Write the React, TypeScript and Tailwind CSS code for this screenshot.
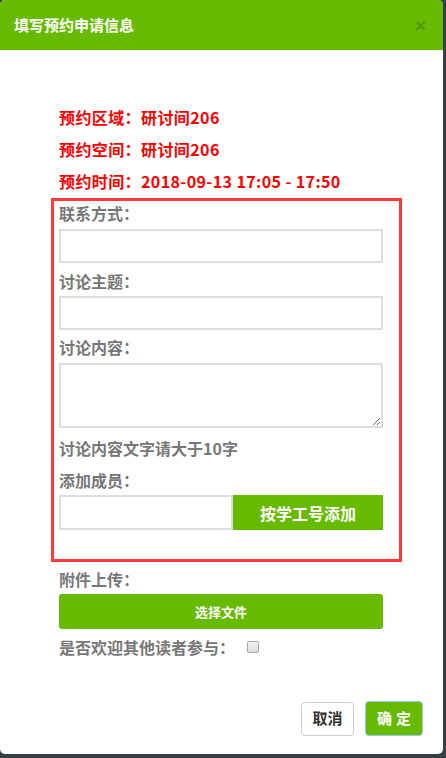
import React from 'react';

const font = { fontFamily: '"Microsoft YaHei", "Noto Sans CJK SC", "Noto Sans", sans-serif' };

const Label: React.FC<{ text: string; className?: string }> = ({ text, className }) => (
  <div className={`h-[24px] leading-[24px] text-[16px] font-semibold text-[#777] ${className ?? ''}`}>{text}</div>
);

export default function App() {
  return (
    <div className="w-[446px] h-[758px] bg-[#353f44] overflow-hidden" style={font}>
      <div className="w-[443px] h-[754px] bg-white rounded-[5px] overflow-hidden flex flex-col">
        {/* header */}
        <div className="h-[50px] shrink-0 bg-[#66bb00] flex items-center justify-between pl-[14px] pr-[17px]">
          <span className="text-[15px] font-bold text-white">填写预约申请信息</span>
          <span className="text-[19px] font-bold leading-none text-black opacity-20" style={{ fontFamily: '"Liberation Sans", Arial, sans-serif' }}>
            ×
          </span>
        </div>

        {/* body */}
        <div className="pt-[51px] pl-[51px]">
          <div className="pl-[8px] text-[16px] font-bold text-[#ff0000] leading-[32px] tracking-[0.4px]">
            <div>预约区域：研讨间206</div>
            <div>预约空间：研讨间206</div>
            <div>预约时间：2018-09-13 17:05 - 17:50</div>
          </div>

          <div className="mt-[1px] w-[351px] border-[3px] border-[#ff3a3a] pl-[5px] pb-[29px]">
            <Label text="联系方式：" />
            <input className="mt-[4px] block w-[324px] h-[34px] border-2 border-[#ddd] outline-none" />
            <Label text="讨论主题：" className="mt-[6px]" />
            <input className="mt-[3px] block w-[324px] h-[34px] border-2 border-[#ddd] outline-none" />
            <Label text="讨论内容：" className="mt-[5px]" />
            <textarea className="mt-[4px] block w-[324px] h-[65px] border-2 border-[#ddd] outline-none" />
            <Label text="讨论内容文字请大于10字" className="mt-[8px]" />
            <Label text="添加成员：" className="mt-[8px]" />
            <div className="mt-[3px] flex w-[324px] h-[35px]">
              <input className="w-[174px] h-full border-2 border-[#ddd] outline-none" />
              <button className="flex-1 h-full bg-[#66bb00] text-white text-[16px] font-bold">按学工号添加</button>
            </div>
          </div>

          <div className="pl-[8px]">
            <Label text="附件上传：" className="mt-[5px]" />
            <button className="mt-[3px] block w-[324px] h-[35px] rounded-[3px] bg-[#66bb00] text-white text-[13px] font-bold">
              选择文件
            </button>
            <div className="mt-[6px] flex items-center h-[24px]">
              <Label text="是否欢迎其他读者参与：" />
              <span className="ml-[12px] w-[12px] h-[12px] rounded-[2px] border border-[#aaa] bg-gradient-to-b from-[#f4f4f4] to-[#dcdcdc]" />
            </div>
          </div>
        </div>

        {/* footer */}
        <div className="mt-[42px] flex justify-end items-center gap-[11px] pr-[20px]">
          <button className="w-[53px] h-[34px] rounded-[4px] border border-[#ccc] bg-white text-[15px] font-bold text-[#333]">
            取消
          </button>
          <button className="w-[58px] h-[35px] rounded-[4px] border border-[#9cc3f0] bg-[#66bb00] text-[15px] font-bold text-white tracking-[4px] pl-[4px]">
            确定
          </button>
        </div>
      </div>
    </div>
  );
}
